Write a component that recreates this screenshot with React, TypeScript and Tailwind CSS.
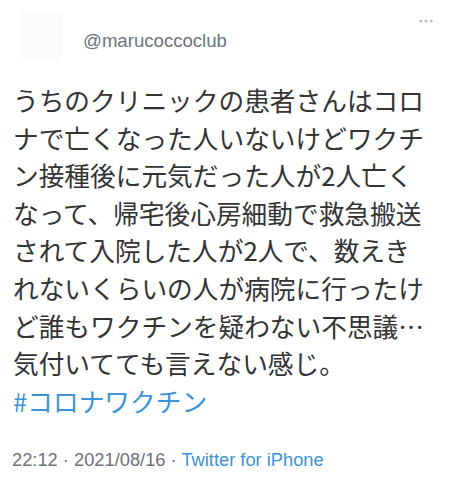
import { MoreHorizontal } from 'lucide-react';

const LINES = [
  'うちのクリニックの患者さんはコロ',
  'ナで亡くなった人いないけどワクチ',
  'ン接種後に元気だった人が2人亡く',
  'なって、帰宅後心房細動で救急搬送',
  'されて入院した人が2人で、数えき',
  'れないくらいの人が病院に行ったけ',
  'ど誰もワクチンを疑わない不思議…',
  '気付いてても言えない感じ。',
];

export default function App() {
  return (
    <div className="w-[449px] h-[481px] bg-white overflow-hidden font-['Noto_Sans_CJK_JP',sans-serif]">
      {/* Header */}
      <div className="flex items-start justify-between pl-[20px] pr-[14px] pt-[12px]">
        <div className="flex items-center gap-[21px]">
          <div className="w-[42px] h-[46px] rounded bg-[#fcfcfc] border border-[#f7f7f7]" />
          <span className="mt-[12px] text-[18.6px] text-[#6b737b] font-['Liberation_Sans',sans-serif]">
            @marucoccoclub
          </span>
        </div>
        <MoreHorizontal size={18} className="text-[#b9bec3]" />
      </div>

      {/* Body */}
      <div className="px-[13px] mt-[23px] text-[25.7px] leading-[37.6px] text-[#333333]">
        {LINES.map((line) => (
          <div key={line} className="whitespace-nowrap">{line}</div>
        ))}
        <div className="text-[#3b94d9] whitespace-nowrap">#コロナワクチン</div>
      </div>

      {/* Meta */}
      <div className="px-[12px] mt-[27px] text-[18.3px] font-['Liberation_Sans',sans-serif] text-[#6b737b] whitespace-nowrap">
        22:12 · 2021/08/16 · <span className="text-[#3b94d9]">Twitter for iPhone</span>
      </div>
    </div>
  );
}
